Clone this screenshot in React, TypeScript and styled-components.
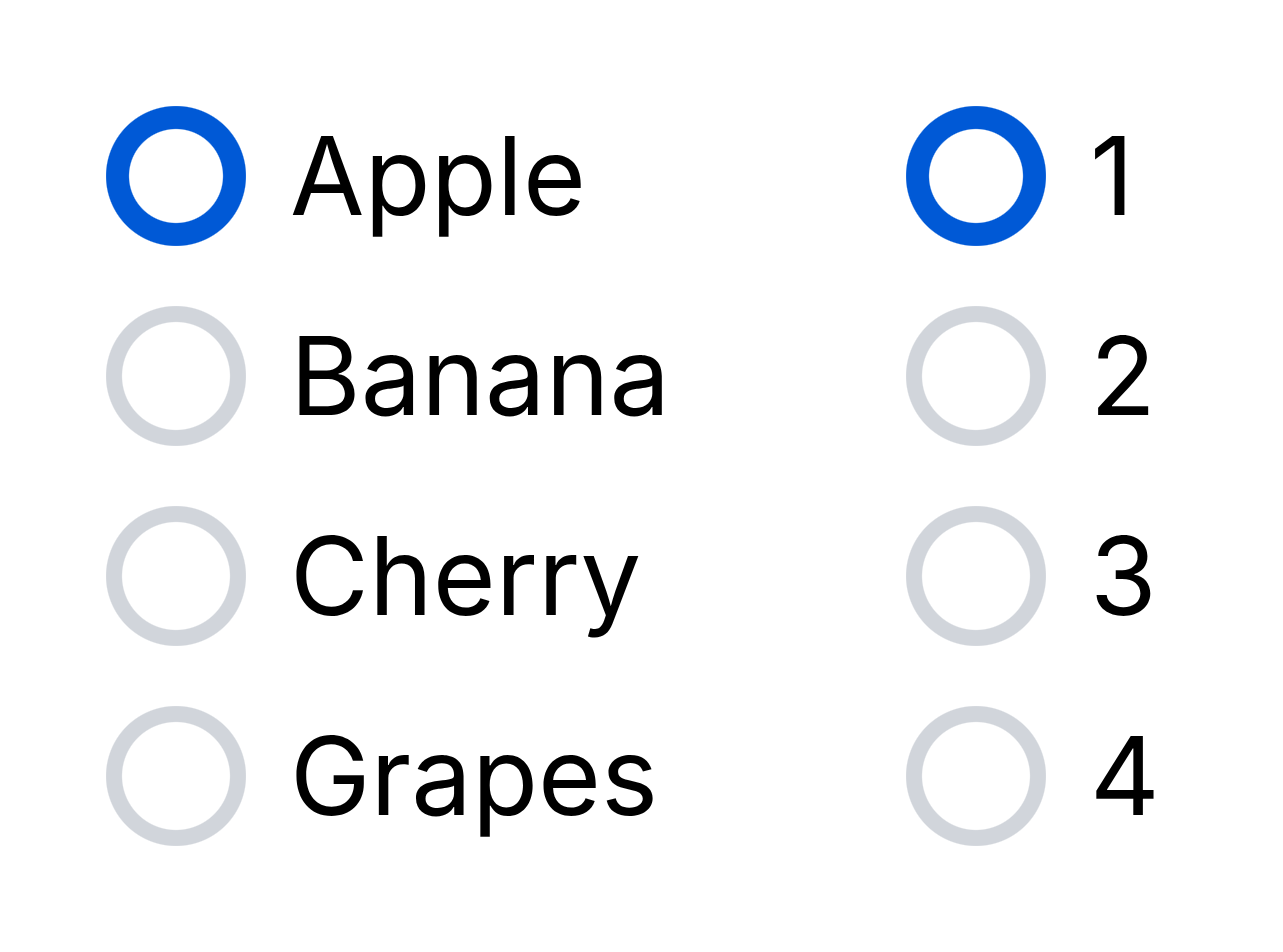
import React, { useState } from 'react';
import styled, { createGlobalStyle } from 'styled-components';

const GlobalStyle = createGlobalStyle`
  html, body {
    margin: 0;
    padding: 0;
    background: #ffffff;
  }
  body {
    font-family: Inter, "Noto Sans", sans-serif;
  }
`;

// Styles
const Page = styled.div`
  display: grid;
  grid-template-columns: 800px auto;
  padding: 106px 0 0 106px;
`;

const Group = styled.div`
  display: flex;
  flex-direction: column;
  gap: 60px;
`;

const Option = styled.label`
  display: flex;
  align-items: center;
  gap: 44px;
  cursor: pointer;
`;

// ring drawn as a radial gradient so the edge stays smooth at this size
const Dot = styled.span<{ $checked: boolean }>`
  display: block;
  width: 140px;
  height: 140px;
  flex: none;
  background: ${({ $checked }) => {
    const c = $checked ? '#0059d6' : '#d1d5db';
    const inner = $checked ? 47 : 54;
    return `radial-gradient(circle closest-side, #ffffff ${inner - 0.6}px, ${c} ${inner + 0.6}px, ${c} 69.4px, rgba(255,255,255,0) 70.6px)`;
  }};
`;

const Label = styled.span`
  font-family: Inter, sans-serif;
  font-size: 108px;
  color: #000000;
  padding-bottom: 2px;
`;

interface RadioGroupProps {
  items: string[];
}

const RadioGroup = ({ items }: RadioGroupProps) => {
  const [value, setValue] = useState(items[0]);
  return (
    <Group role="radiogroup">
      {items.map((item) => (
        <Option key={item} onClick={() => setValue(item)}>
          <Dot $checked={value === item} role="radio" aria-checked={value === item} />
          <Label>{item}</Label>
        </Option>
      ))}
    </Group>
  );
};

const App = () => {
  return (
    <>
      <GlobalStyle />
      <Page>
        <RadioGroup items={['Apple', 'Banana', 'Cherry', 'Grapes']} />
        <RadioGroup items={['1', '2', '3', '4']} />
      </Page>
    </>
  );
};

export default App;
